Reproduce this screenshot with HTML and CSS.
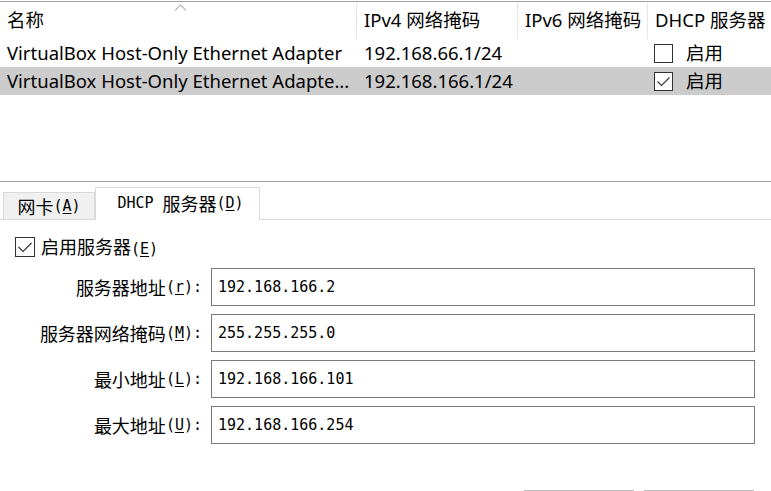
FILE: index.html
```html
<!DOCTYPE html>
<html lang="zh-CN">
<head>
<meta charset="utf-8">
<title>Host-Only 网络</title>
<link rel="stylesheet" href="styles.css">
</head>
<body>
<div class="list">
  <div class="list-head">
    <div class="hcell">名称</div>
    <div class="hcell">IPv4 网络掩码</div>
    <div class="hcell">IPv6 网络掩码</div>
    <div class="hcell last">DHCP 服务器</div>
    <svg class="sort" width="13" height="7" viewBox="0 0 13 7"><path d="M1 6.5 L6.5 1 L12 6.5" fill="none" stroke="#8a8a8a" stroke-width="1"/></svg>
  </div>
  <div class="row">
    <div class="cell name">VirtualBox Host-Only Ethernet Adapter</div>
    <div class="cell ip">192.168.66.1/24</div>
    <div class="cell"></div>
    <div class="cell dhcp">
      <svg class="cb" width="19" height="19" viewBox="0 0 19 19"><rect x="0.5" y="0.5" width="18" height="18" fill="#fff" stroke="#333"/></svg>
      <span>启用</span>
    </div>
  </div>
  <div class="row selected">
    <div class="cell name">VirtualBox Host-Only Ethernet Adapte...</div>
    <div class="cell ip">192.168.166.1/24</div>
    <div class="cell"></div>
    <div class="cell dhcp">
      <svg class="cb" width="19" height="19" viewBox="0 0 19 19"><rect x="0.5" y="0.5" width="18" height="18" fill="#fff" stroke="#333"/><path d="M3.5 9.5 L7.5 13.5 L15.5 5.5" fill="none" stroke="#333" stroke-width="1.1"/></svg>
      <span>启用</span>
    </div>
  </div>
</div>

<div class="tabstrip">
  <div class="tab sim"><span class="zh">网卡</span>(<u>A</u>)</div>
  <div class="tab active sim">DHCP <span class="zh">服务器</span>(<u>D</u>)</div>
</div>

<div class="panel">
  <div class="enable sim">
    <svg class="cb" width="20" height="20" viewBox="0 0 20 20"><rect x="0.5" y="0.5" width="19" height="19" fill="#fff" stroke="#333"/><path d="M3.5 10 L8 14.5 L16.5 6" fill="none" stroke="#333" stroke-width="1.1"/></svg>
    <span><span class="zh">启用服务器</span>(<u>E</u>)</span>
  </div>
  <div class="form">
    <div class="lbl sim"><span class="zh">服务器地址</span>(<u>r</u>):</div>
    <div class="field">192.168.166.2</div>
    <div class="lbl sim"><span class="zh">服务器网络掩码</span>(<u>M</u>):</div>
    <div class="field">255.255.255.0</div>
    <div class="lbl sim"><span class="zh">最小地址</span>(<u>L</u>):</div>
    <div class="field">192.168.166.101</div>
    <div class="lbl sim"><span class="zh">最大地址</span>(<u>U</u>):</div>
    <div class="field">192.168.166.254</div>
  </div>
  <div class="buttons">
    <div class="btn"></div>
    <div class="btn"></div>
  </div>
</div>
</body>
</html>
```
FILE: styles.css
```css
html, body {
  margin: 0;
  height: 491px;
  overflow: hidden;
  background: #fff;
}
body {
  font-family: "Noto Sans", "Noto Sans CJK SC", sans-serif;
  color: #000;
}

/* ---------- list ---------- */
.list {
  margin-top: 1px;
  height: 179px;
  border-top: 1px solid #a0a0a0;
  border-bottom: 1px solid #a0a0a0;
}
.list-head {
  position: relative;
  display: grid;
  grid-template-columns: 357px 161px 130px 1fr;
  height: 37px;
  font-size: 18.5px;
}
.hcell {
  margin-top: 1px;
  padding-left: 7px;
  line-height: 34px;
  border-right: 1px solid #e5e5e5;
  white-space: nowrap;
  overflow: hidden;
}
.hcell.last { border-right: 0; }
.sort {
  position: absolute;
  left: 174px;
  top: 2px;
}
.row {
  display: grid;
  grid-template-columns: 357px 161px 130px 1fr;
  height: 28px;
  align-items: center;
  font-size: 18.5px;
  line-height: 28px;
}
.row.selected { background: #cccccc; }
.cell {
  padding-left: 7px;
  white-space: nowrap;
  overflow: hidden;
}
.cell.dhcp {
  display: flex;
  align-items: center;
  gap: 13px;
  padding-left: 6px;
}
.cb { display: block; flex: none; }

/* ---------- tabs ---------- */
.sim {
  font-family: "DejaVu Sans Mono", monospace;
  font-size: 15px;
}
.zh {
  font-family: "Noto Sans CJK SC", sans-serif;
  font-size: 18px;
}
.sim u { text-underline-offset: 2px; }
.tabstrip {
  display: flex;
  align-items: flex-end;
  height: 37px;
  padding-left: 3px;
  border-bottom: 1px solid #d9d9d9;
}
.tab {
  box-sizing: border-box;
  width: 92px;
  height: 27px;
  background: #f0f0f0;
  border: 1px solid #d9d9d9;
  border-bottom: 0;
  display: flex;
  align-items: center;
  justify-content: center;
  line-height: 1;
  white-space: pre;
}
.tab.active {
  width: 165px;
  height: 33px;
  margin-bottom: -1px;
  background: #fff;
  padding-left: 6px;
  padding-bottom: 2px;
}

/* ---------- panel ---------- */
.enable {
  display: flex;
  align-items: center;
  gap: 6px;
  height: 20px;
  margin: 17px 0 0 15px;
  line-height: 1;
}
.form {
  display: grid;
  grid-template-columns: 203px 544px;
  grid-auto-rows: 38px;
  column-gap: 8px;
  row-gap: 8px;
  margin-top: 11px;
}
.lbl {
  display: flex;
  align-items: center;
  justify-content: flex-end;
  line-height: 1;
  white-space: pre;
  padding-right: 1px;
}
.field {
  box-sizing: border-box;
  border: 1px solid #7a7a7a;
  padding-left: 6px;
  display: flex;
  align-items: center;
  font-family: "DejaVu Sans Mono", monospace;
  font-size: 15px;
}
.buttons {
  display: flex;
  justify-content: flex-end;
  gap: 10px;
  padding-right: 17px;
  margin-top: 46px;
}
.btn {
  box-sizing: border-box;
  width: 110px;
  height: 1px;
  border-top: 1px solid #bdbdbd;
}
```
